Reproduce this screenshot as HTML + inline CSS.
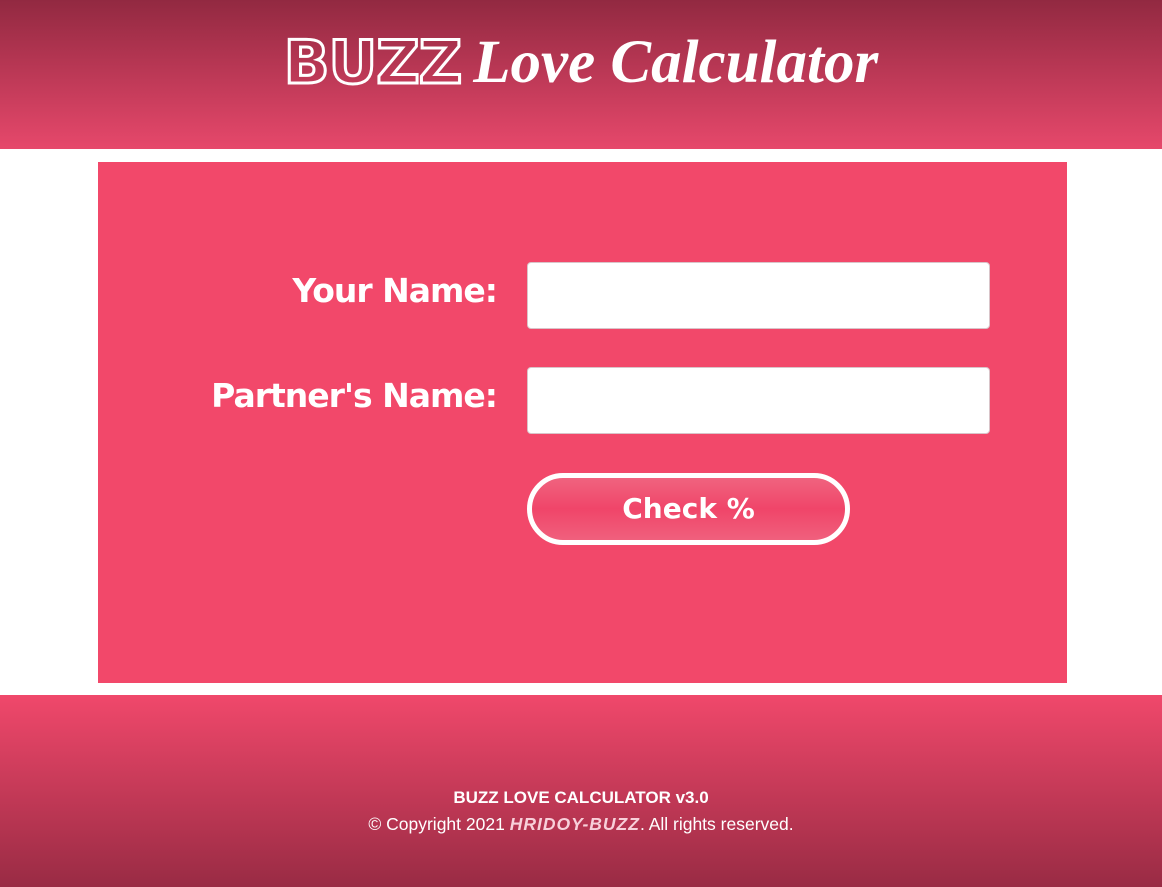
<!DOCTYPE html>
<html><head><meta charset="utf-8"><style>
*{margin:0;padding:0;box-sizing:border-box}
body{width:1162px;height:887px;background:#fff;font-family:"Liberation Sans",sans-serif;position:relative;overflow:hidden}
.hdr{position:absolute;left:0;top:0;width:1162px;height:149px;background:linear-gradient(#922941,#e6486b)}
.t{position:absolute;top:28px;left:0;width:1162px;text-align:center;white-space:nowrap;color:#fff}
.buzz{font-family:"DejaVu Sans",sans-serif;font-weight:bold;font-size:60px;color:transparent;-webkit-text-stroke:3px #fff;letter-spacing:-1px;vertical-align:middle}
.love{font-family:"Liberation Serif",serif;font-style:italic;font-weight:bold;font-size:61px;vertical-align:middle;margin-left:12px}
.main{position:absolute;left:98px;top:162px;width:969px;height:521px;background:#f2486a}
.lbl{position:absolute;right:570px;color:#fff;font-family:"DejaVu Sans",sans-serif;font-weight:bold;font-size:33px;letter-spacing:-1px}
.in{position:absolute;left:429px;width:463px;height:67px;background:#fff;border:1px solid #d9c4c9;border-radius:4px}
.btn{position:absolute;left:429px;top:311px;width:323px;height:72px;border:5px solid #fff;border-radius:36px;background:linear-gradient(#f0637f,#f04569 50%,#f0607d);color:#fff;font-family:"DejaVu Sans",sans-serif;font-weight:bold;font-size:28px;text-align:center;line-height:61px}
.ftr{position:absolute;left:0;top:695px;width:1162px;height:192px;background:linear-gradient(#f0486b,#992b44);color:#fff;text-align:center;font-size:17px}
.ftr b{display:block;margin-top:92px;line-height:22px}
.ftr p{line-height:30px;font-size:17.5px}
.hb{font-style:italic;font-weight:bold;color:#f8d0da;letter-spacing:1px}
</style></head><body>
<div class="hdr"><div class="t"><span class="buzz">BUZZ</span><span class="love">Love Calculator</span></div></div>
<div class="main">
<div class="lbl" style="top:109px">Your Name:</div>
<div class="in" style="top:100px"></div>
<div class="lbl" style="top:214px">Partner's Name:</div>
<div class="in" style="top:205px"></div>
<div class="btn">Check %</div>
</div>
<div class="ftr"><b>BUZZ LOVE CALCULATOR v3.0</b><p>© Copyright 2021 <span class="hb">HRIDOY-BUZZ</span>. All rights reserved.</p></div>
</body></html>
